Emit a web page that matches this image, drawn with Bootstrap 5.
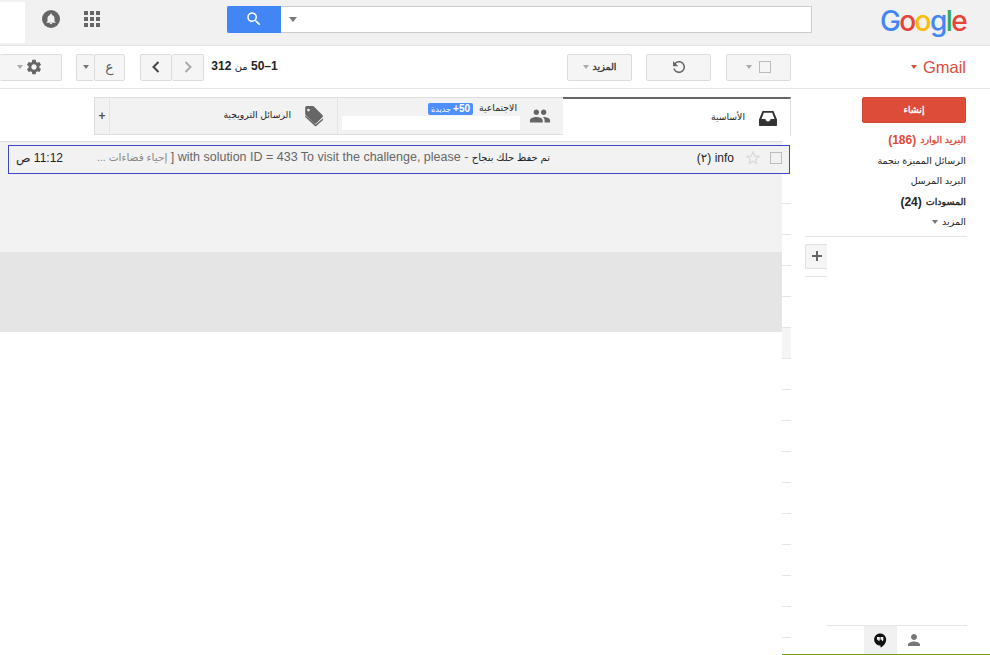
<!DOCTYPE html>
<html lang="ar" dir="rtl">
<head>
  <meta charset="UTF-8" />
  <meta name="viewport" content="width=device-width, initial-scale=1.0" />
  <title>Gmail</title>
  <link href="https://cdn.jsdelivr.net/npm/bootstrap@5.3.0/dist/css/bootstrap.min.css" rel="stylesheet" />
  <style>
    html, body { height: 655px; overflow: hidden; }
    body {
      background: #fff;
      color: #222;
      font-family: "Liberation Sans", "DejaVu Sans", sans-serif;
      font-size: 12px;
    }
    svg { display: block; fill: currentColor; }
    .ar-bold { -webkit-text-stroke: .35px currentColor; }

    .gbar { height: 46px; background: #f1f1f1; border-bottom: 1px solid #e5e5e5; }
    .logo-box { width: 178px; padding-right: 24px; padding-bottom: 4px; }
    .logo-text { font-family: "Inter", sans-serif; font-size: 28px; font-weight: 500; letter-spacing: -1.6px; line-height: 1; }
    .search-box { width: 585px; height: 27px; margin-top: -6px; background: #fff; border: 1px solid #ccc; border-left: 0; }
    .search-caret { width: 24px; color: #777; }
    .search-caret .caret-down { border-left-width: 4.5px; border-right-width: 4.5px; border-top-width: 5px; }
    .search-go { width: 54px; height: 27px; margin-top: -1px; background: #4285f4; color: #fff; border-radius: 2px 0 0 2px; }
    .apps-icon { margin-right: 127px; margin-top: -8px; color: #666; }
    .bell-icon { margin-right: 24px; margin-top: -8px; color: #666; }
    .white-slot { width: 25px; height: 41px; background: #fff; margin-right: 17px; flex-shrink: 0; }

    .tools { height: 43px; border-bottom: 1px solid #e5e5e5; }
    .mail-label { width: 199px; padding-right: 24px; color: #dd4b39; font-size: 16.5px; flex-shrink: 0; }
    .caret-down { width: 0; height: 0; border-left: 3.5px solid transparent; border-right: 3.5px solid transparent; border-top: 4px solid #777; display: inline-block; }
    .caret-red { border-top-color: #dd4b39; margin-right: 2px; }
    .caret-pale { border-top-color: #aaa; }
    .tbtn {
      height: 27px;
      padding: 0;
      background: #f5f5f5;
      border: 1px solid #dcdcdc;
      border-radius: 2px;
      color: #666;
      display: flex;
      align-items: center;
      justify-content: center;
      font-size: 11px;
      flex-shrink: 0;
    }
    .tbtn-check { width: 65px; gap: 7px; }
    .check-box { width: 12px; height: 12px; border: 1px solid #bbb; display: inline-block; }
    .tbtn-reload { width: 65px; margin-right: 15px; }
    .tbtn-more { width: 65px; margin-right: 14px; color: #333; font-size: 9.5px; gap: 4px; }
    .page-count { width: 67px; margin-right: 289px; font-size: 12px; color: #222; white-space: nowrap; flex-shrink: 0; text-align: center; margin-top: -2px; }
    .page-of { font-size: 10px; font-weight: 400; }
    .page-group { margin-right: 7px; flex-shrink: 0; }
    .tbtn-page { width: 32px; }
    .tbtn-page + .tbtn-page { border-left: 0; }
    .lang-group { margin-right: 15px; flex-shrink: 0; }
    .tbtn-lang { width: 31px; font-size: 14px; }
    .tbtn-langc { width: 18px; border-right: 0; }
    .tbtn-gear { width: 62px; margin-right: 14px; gap: 2px; border-left: 0; justify-content: flex-start; padding-right: 18px; }

    .body-wrap { height: 566px; }
    .side-col { width: 199px; flex-shrink: 0; border-bottom: 1px solid #6a9b2a; padding-top: 8px; }
    .compose-btn {
      width: 104px; height: 26px; margin-right: 24px; padding: 0;
      background: #dd4b39; border: 1px solid #d14836; border-radius: 2px;
      color: #fff; font-size: 9.5px;
      display: flex; align-items: center; justify-content: center;
    }
    .side-links { margin: 7px 24px 0 0; }
    .side-links a { display: flex; align-items: center; gap: 4px; height: 20.5px; color: #222; text-decoration: none; font-size: 9.5px; white-space: nowrap; }
    .side-links .num { font-size: 12px; font-weight: 700; -webkit-text-stroke: 0; }
    .side-links .now { color: #dd4b39; }
    .side-rule { width: 162px; margin: 3px 23px 0 0; border-top: 1px solid #e5e5e5; }
    .add-wrap { width: 22px; margin: 7px 163px 0 0; }
    .add-btn { width: 22px; height: 25px; background: #f5f5f5; border: 1px solid #e0e0e0; border-right: 0; border-radius: 2px 0 0 2px; color: #666; padding: 0; display: flex; align-items: center; justify-content: center; }
    .add-rule { border-top: 1px solid #e5e5e5; margin-top: 7px; }
    .side-foot { width: 140px; margin-right: 23px; border-top: 1px solid #e5e5e5; height: 29px; }
    .foot-person { width: 34px; margin-right: 36px; color: #777; }
    .foot-chat { width: 33px; background: #f1f1f1; color: #111; }

    .main-col { width: 791px; flex-shrink: 0; }
    .tab-row { height: 39px; margin-top: 8px; }
    .tab-item { height: 38px; background: #f2f2f2; border-top: 1px solid #ddd; border-bottom: 1px solid #ddd; flex-shrink: 0; }
    .tab-on { width: 228px; height: 39px; background: #fff; border-top: 2px solid #666; border-bottom: 0; border-right: 1px solid #ddd; color: #222; }
    .tab-social { width: 226px; border-left: 1px solid #e5e5e5; }
    .tab-promo { width: 227px; }
    .tab-plus { width: 16px; border-left: 1px solid #ddd; border-right: 1px solid #e5e5e5; justify-content: center; font-weight: 700; color: #555; font-size: 12px; }
    .tab-ico { width: 46px; display: flex; justify-content: center; color: #666; flex-shrink: 0; }
    .tab-on .tab-ico { color: #333; width: 45px; }
    .tab-label { font-size: 9.3px; white-space: nowrap; }
    .new-pill { background: #4d90fe; color: #fff; font-size: 8px; border-radius: 2px; padding: 0 3px; line-height: 12px; height: 12px; white-space: nowrap; margin-right: 6px; }
    .pill-num { font-size: 10px; font-weight: 700; }
    .white-strip { width: 178px; height: 14px; background: #fff; margin-top: 1px; margin-right: -3px; }

    .list-area { margin-top: 5px; height: 514px; }
    .tick-col { width: 9px; flex-shrink: 0; border-bottom: 1px solid #6a9b2a; padding-top: 32px; }
    .tick-row { height: 31px; border-bottom: 1px solid #e5e5e5; }
    .tick-grey { background: #f5f5f5; }
    .fill-col { width: 782px; flex-shrink: 0; }
    .grey-a { height: 111px; background: #f2f2f2; border-top: 1px solid #ddd; padding-top: 3px; }
    .grey-b { height: 80px; background: #e5e5e5; }
    .mail-row {
      height: 29px; margin-right: -8px; width: 782px; padding-bottom: 4px;
      background: #f2f2f2; border: 1px solid #3d46c9; white-space: nowrap;
    }
    .row-check { width: 12px; height: 12px; border: 1px solid #bbb; margin-right: 7px; flex-shrink: 0; }
    .row-star { margin-right: 8px; color: #d8d8d8; flex-shrink: 0; }
    .row-from { width: 38px; margin-right: 10px; font-size: 12px; color: #222; flex-shrink: 0; }
    .row-text { width: 457px; margin-right: 146px; overflow: hidden; font-size: 12.5px; color: #666; flex-shrink: 0; }
    .row-subject { color: #222; font-size: 10px; }
    .row-snip { color: #888; font-size: 10.5px; }
    .row-time { margin-right: 30px; font-size: 12px; color: #222; flex-shrink: 0; }
  </style>
</head>
<body>
  <div class="gbar d-flex align-items-center">
    <div class="logo-box flex-shrink-0">
      <div class="logo-text text-end" dir="ltr"><span style="color:#4285f4">G</span><span style="color:#ea4335">o</span><span style="color:#fbbc05">o</span><span style="color:#4285f4">g</span><span style="color:#34a853">l</span><span style="color:#ea4335">e</span></div>
    </div>
    <div class="search-box d-flex align-items-center justify-content-end flex-shrink-0">
      <span class="search-caret d-flex justify-content-center"><span class="caret-down"></span></span>
      <span class="search-go d-flex align-items-center justify-content-center">
        <svg width="18" height="18" viewBox="0 0 24 24"><path d="M15.5 14h-.79l-.28-.27C15.41 12.59 16 11.11 16 9.5 16 5.91 13.09 3 9.5 3S3 5.91 3 9.5 5.91 16 9.5 16c1.61 0 3.09-.59 4.23-1.57l.27.28v.79l5 4.99L20.49 19l-4.99-5zm-6 0C7.01 14 5 11.99 5 9.5S7.01 5 9.5 5 14 7.01 14 9.5 11.99 14 9.5 14z"/></svg>
      </span>
    </div>
    <svg class="apps-icon flex-shrink-0" width="16" height="16" viewBox="0 0 16 16"><path d="M0 0h4v4H0zM6 0h4v4H6zM12 0h4v4h-4zM0 6h4v4H0zM6 6h4v4H6zM12 6h4v4h-4zM0 12h4v4H0zM6 12h4v4H6zM12 12h4v4h-4z"/></svg>
    <svg class="bell-icon flex-shrink-0" width="18" height="18" viewBox="0 0 18 18"><circle cx="9" cy="9" r="9"/><path fill="#f1f1f1" d="M9 14.2c.7 0 1.2-.5 1.2-1.1H7.800c0 .6.5 1.100 1.200 1.100zm3.500-3V8.500c0-1.800-1-3.200-2.600-3.600V4.500c0-.5-.4-.9-.9-.9s-.9.4-.9.900v.4C6.500 5.300 5.500 6.700 5.500 8.500v2.700l-1 1v.5h9v-.5l-1-1z"/></svg>
    <div class="white-slot"></div>
  </div>

  <div class="tools d-flex align-items-center">
    <div class="mail-label d-flex align-items-center gap-1">
      <span dir="ltr">Gmail</span><span class="caret-down caret-red"></span>
    </div>
    <button class="btn tbtn tbtn-check" type="button"><span class="check-box"></span><span class="caret-down caret-pale"></span></button>
    <button class="btn tbtn tbtn-reload" type="button">
      <svg width="18" height="18" viewBox="0 0 24 24" style="transform:scaleX(-1)"><path d="M17.650 6.350C16.200 4.900 14.210 4 12 4c-4.420 0-7.990 3.580-7.990 8s3.570 8 7.990 8c3.730 0 6.840-2.550 7.730-6h-2.080c-.82 2.330-3.040 4-5.650 4-3.310 0-6-2.690-6-6s2.690-6 6-6c1.660 0 3.140.69 4.220 1.780L13 11h7V4l-2.350 2.350z"/></svg>
    </button>
    <button class="btn tbtn tbtn-more" type="button"><span class="ar-bold">المزيد</span><span class="caret-down caret-pale"></span></button>
    <div class="page-count"><b>1–50</b> <span class="page-of">من</span> <b>312</b></div>
    <div class="page-group d-flex" dir="ltr">
      <button class="btn tbtn tbtn-page" type="button"><svg width="14" height="14" viewBox="0 0 14 14"><path fill="none" stroke="#444" stroke-width="2" d="M9.500 2 4.500 7l5 5"/></svg></button>
      <button class="btn tbtn tbtn-page" type="button"><svg width="14" height="14" viewBox="0 0 14 14"><path fill="none" stroke="#aaa" stroke-width="2" d="M4.500 2l5 5-5 5"/></svg></button>
    </div>
    <div class="lang-group d-flex">
      <button class="btn tbtn tbtn-lang" type="button">ع</button>
      <button class="btn tbtn tbtn-langc" type="button"><span class="caret-down"></span></button>
    </div>
    <button class="btn tbtn tbtn-gear" type="button">
      <svg width="18" height="18" viewBox="0 0 24 24"><path d="M19.140 12.940c.04-.3.06-.61.06-.94 0-.32-.02-.64-.07-.94l2.030-1.580c.18-.14.23-.41.12-.61l-1.920-3.320c-.12-.22-.37-.29-.59-.22l-2.390.96c-.5-.38-1.030-.7-1.620-.94l-.36-2.540c-.04-.24-.24-.41-.48-.41h-3.840c-.24 0-.43.17-.47.41l-.36 2.540c-.59.24-1.130.57-1.620.94l-2.390-.96c-.22-.08-.47 0-.59.22L2.740 8.870c-.12.21-.08.47.12.61l2.030 1.580c-.05.3-.09.63-.09.94s.02.64.07.94l-2.030 1.580c-.18.14-.23.41-.12.61l1.920 3.320c.12.22.37.29.59.22l2.390-.96c.5.38 1.030.7 1.620.94l.36 2.540c.05.24.24.41.48.41h3.840c.24 0 .44-.17.47-.41l.36-2.540c.59-.24 1.130-.56 1.620-.94l2.390.96c.22.08.47 0 .59-.22l1.920-3.320c.12-.22.07-.47-.12-.61l-2.010-1.580zM12 15.600c-1.980 0-3.600-1.620-3.600-3.600s1.620-3.600 3.600-3.600 3.600 1.620 3.600 3.600-1.620 3.600-3.600 3.600z"/></svg>
      <span class="caret-down caret-pale"></span>
    </button>
  </div>

  <div class="body-wrap d-flex">
    <div class="side-col d-flex flex-column">
      <button class="btn compose-btn" type="button"><span class="ar-bold">إنشاء</span></button>
      <div class="side-links">
        <a href="#" class="now"><span class="ar-bold">البريد الوارد</span> <span class="num">(186)</span></a>
        <a href="#">الرسائل المميزة بنجمة</a>
        <a href="#">البريد المرسل</a>
        <a href="#"><span class="ar-bold">المسودات</span> <span class="num">(24)</span></a>
        <a href="#">المزيد <span class="caret-down"></span></a>
      </div>
      <div class="side-rule"></div>
      <div class="add-wrap">
        <button class="btn add-btn" type="button"><svg width="12" height="12" viewBox="0 0 12 12"><path d="M5 1h2v4h4v2H7v4H5V7H1V5h4z"/></svg></button>
        <div class="add-rule"></div>
      </div>
      <div class="side-foot d-flex mt-auto">
        <div class="foot-person d-flex align-items-center justify-content-center">
          <svg width="18" height="18" viewBox="0 0 24 24"><path d="M12 12c2.210 0 4-1.790 4-4s-1.790-4-4-4-4 1.790-4 4 1.790 4 4 4zm0 2c-2.670 0-8 1.340-8 4v2h16v-2c0-2.660-5.330-4-8-4z"/></svg>
        </div>
        <div class="foot-chat d-flex align-items-center justify-content-center">
          <svg width="17" height="17" viewBox="0 0 24 24"><path d="M11.500 2C6.810 2 3 5.810 3 10.500S6.810 19 11.500 19h.5v3c4.860-2.340 8-7 8-11.500C20 5.810 16.190 2 11.500 2zM11 11c0 1.100-.9 2-2 2v-2H7V7h4zm5 0c0 1.100-.9 2-2 2v-2h-2V7h4z"/></svg>
        </div>
      </div>
    </div>

    <div class="main-col">
      <div class="tab-row d-flex">
        <div class="tab-item tab-on d-flex align-items-center">
          <span class="tab-ico">
            <svg width="20" height="20" viewBox="0 0 20 20"><path fill-rule="evenodd" d="M4.500 3h11L19 11.500V17c0 .6-.4 1-1 1H2c-.6 0-1-.4-1-1v-5.500zM5.800 4.800 3.500 11h4c0 1.400 1.100 2.500 2.500 2.500s2.500-1.100 2.500-2.500h4l-2.300-6.200z"/></svg>
          </span>
          <span class="tab-label">الأساسية</span>
        </div>
        <div class="tab-item tab-social d-flex align-items-center">
          <span class="tab-ico">
            <svg width="22" height="22" viewBox="0 0 24 24"><path d="M16 11c1.660 0 2.990-1.340 2.990-3S17.660 5 16 5c-1.660 0-3 1.340-3 3s1.340 3 3 3zm-8 0c1.660 0 2.990-1.340 2.990-3S9.660 5 8 5C6.340 5 5 6.340 5 8s1.340 3 3 3zm0 2c-2.330 0-7 1.170-7 3.500V19h14v-2.500c0-2.330-4.670-3.500-7-3.500zm8 0c-.29 0-.62.02-.97.05 1.160.84 1.970 1.970 1.970 3.450V19h6v-2.500c0-2.330-4.670-3.500-7-3.500z"/></svg>
          </span>
          <div>
            <div class="d-flex align-items-center">
              <span class="tab-label">الاجتماعية</span>
              <span class="new-pill"><span class="pill-num">50+</span> جديدة</span>
            </div>
            <div class="white-strip"></div>
          </div>
        </div>
        <div class="tab-item tab-promo d-flex align-items-center">
          <span class="tab-ico">
            <svg width="22" height="22" viewBox="0 0 20 20"><path d="M2 2.500C2 1.700 2.700 1 3.500 1h5.300c.4 0 .8.2 1.100.4l7.700 7.700c.6.6.6 1.500 0 2.100l-5.500 5.500c-.6.6-1.500.6-2.100 0L2.400 9C2.100 8.700 2 8.300 2 7.900zM5 5.800a1.200 1.200 0 1 0 0-2.400 1.200 1.200 0 0 0 0 2.400z"/><path d="M2 11l8.800 8.200c.4.3.9.3 1.300 0l6.400-5.700-.8-.9-6.200 5.200L2 9.300z"/></svg>
          </span>
          <span class="tab-label">الرسائل الترويجية</span>
        </div>
        <div class="tab-item tab-plus d-flex align-items-center">+</div>
      </div>

      <div class="list-area d-flex">
        <div class="tick-col">
          <div class="tick-row"></div>
          <div class="tick-row"></div>
          <div class="tick-row"></div>
          <div class="tick-row"></div>
          <div class="tick-row"></div>
          <div class="tick-row tick-grey"></div>
          <div class="tick-row"></div>
          <div class="tick-row"></div>
          <div class="tick-row"></div>
          <div class="tick-row"></div>
          <div class="tick-row"></div>
          <div class="tick-row"></div>
          <div class="tick-row"></div>
          <div class="tick-row"></div>
          <div class="tick-row"></div>
        </div>
        <div class="fill-col">
          <div class="grey-a">
            <div class="mail-row d-flex align-items-center">
              <span class="row-check"></span>
              <svg class="row-star" width="18" height="18" viewBox="0 0 24 24"><path d="M22 9.240l-7.190-.62L12 2 9.190 8.630 2 9.240l5.460 4.730L5.820 21 12 17.270 18.180 21l-1.630-7.030L22 9.240zM12 15.400l-3.760 2.270 1-4.280-3.320-2.880 4.380-.38L12 6.100l1.710 4.040 4.380.38-3.320 2.880 1 4.280L12 15.400z"/></svg>
              <span class="row-from">info (٢)</span>
              <span class="row-text"><span class="row-subject">تم حفظ حلك بنجاح</span> - with solution ID = 433 To visit the challenge, please [ <span class="row-snip">إحياء فضاءات ...</span></span>
              <span class="row-time">11:12 ص</span>
            </div>
          </div>
          <div class="grey-b"></div>
        </div>
      </div>
    </div>
  </div>
  <script src="https://cdn.jsdelivr.net/npm/bootstrap@5.3.0/dist/js/bootstrap.bundle.min.js"></script>
</body>
</html>
